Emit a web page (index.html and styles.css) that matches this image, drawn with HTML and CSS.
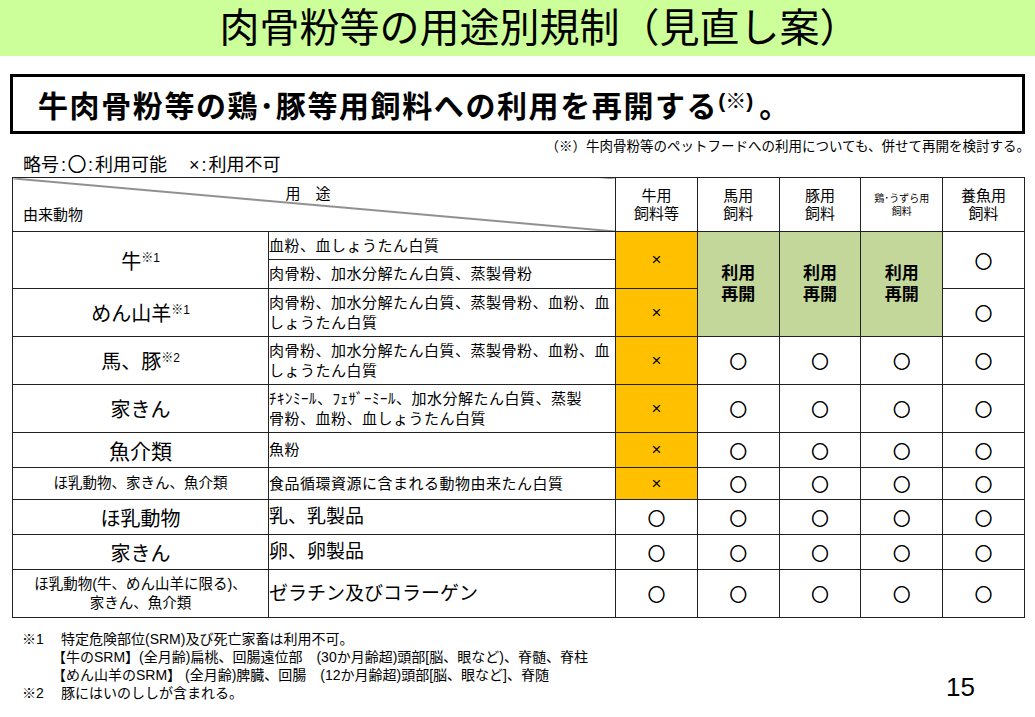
FILE: index.html
```html
<!DOCTYPE html>
<html lang="ja">
<head>
<meta charset="utf-8">
<title>肉骨粉等の用途別規制（見直し案）</title>
<link rel="stylesheet" href="styles.css">
</head>
<body>
<header class="band"><h1 class="title">肉骨粉等の用途別規制（見直し案）</h1></header>
<div class="headline"><span class="headline-text">牛肉骨粉等の鶏･豚等用飼料への利用を再開する<span class="hl-sup">(※)</span><span class="hl-end">。</span></span></div>
<p class="note">（※）牛肉骨粉等のペットフードへの利用についても、併せて再開を検討する。</p>
<p class="legend">略号<span class="colon">:</span><span class="circ">○</span><span class="colon">:</span>利用可能<span class="gap"></span>×<span class="colon">:</span>利用不可</p>
<table class="grid">
  <colgroup>
    <col class="c-animal">
    <col class="c-desc">
    <col class="c-mark">
    <col class="c-mark">
    <col class="c-mark">
    <col class="c-mark">
    <col class="c-mark">
  </colgroup>
  <tr class="r-head">
    <th colspan="2" class="diag"><div class="diag-inner"><span class="diag-top">用　途</span><span class="diag-bottom">由来動物</span></div></th>
    <th class="colh">牛用<br>飼料等</th>
    <th class="colh">馬用<br>飼料</th>
    <th class="colh">豚用<br>飼料</th>
    <th class="colh colh-small">鶏･うずら用<br>飼料</th>
    <th class="colh">養魚用<br>飼料</th>
  </tr>
  <tr class="r28">
    <td rowspan="2" class="animal">牛<span class="sup">※1</span></td>
    <td class="desc">血粉、血しょうたん白質</td>
    <td rowspan="2" class="mark ng">×</td>
    <td rowspan="3" class="resume">利用<br>再開</td>
    <td rowspan="3" class="resume">利用<br>再開</td>
    <td rowspan="3" class="resume">利用<br>再開</td>
    <td rowspan="2" class="mark ok">○</td>
  </tr>
  <tr class="r29">
    <td class="desc">肉骨粉、加水分解たん白質、蒸製骨粉</td>
  </tr>
  <tr class="r48">
    <td class="animal">めん山羊<span class="sup">※1</span></td>
    <td class="desc">肉骨粉、加水分解たん白質、蒸製骨粉、血粉、血<br>しょうたん白質</td>
    <td class="mark ng">×</td>
    <td class="mark ok">○</td>
  </tr>
  <tr class="r48">
    <td class="animal">馬、豚<span class="sup">※2</span></td>
    <td class="desc">肉骨粉、加水分解たん白質、蒸製骨粉、血粉、血<br>しょうたん白質</td>
    <td class="mark ng">×</td>
    <td class="mark ok">○</td>
    <td class="mark ok">○</td>
    <td class="mark ok">○</td>
    <td class="mark ok">○</td>
  </tr>
  <tr class="r48">
    <td class="animal">家きん</td>
    <td class="desc">ﾁｷﾝﾐｰﾙ、ﾌｪｻﾞｰﾐｰﾙ、加水分解たん白質、蒸製<br>骨粉、血粉、血しょうたん白質</td>
    <td class="mark ng">×</td>
    <td class="mark ok">○</td>
    <td class="mark ok">○</td>
    <td class="mark ok">○</td>
    <td class="mark ok">○</td>
  </tr>
  <tr class="r35">
    <td class="animal animal-fish">魚介類</td>
    <td class="desc">魚粉</td>
    <td class="mark ng">×</td>
    <td class="mark ok">○</td>
    <td class="mark ok">○</td>
    <td class="mark ok">○</td>
    <td class="mark ok">○</td>
  </tr>
  <tr class="r32">
    <td class="animal animal-small">ほ乳動物、家きん、魚介類</td>
    <td class="desc">食品循環資源に含まれる動物由来たん白質</td>
    <td class="mark ng">×</td>
    <td class="mark ok">○</td>
    <td class="mark ok">○</td>
    <td class="mark ok">○</td>
    <td class="mark ok">○</td>
  </tr>
  <tr class="r35">
    <td class="animal">ほ乳動物</td>
    <td class="desc desc-large">乳、乳製品</td>
    <td class="mark ok">○</td>
    <td class="mark ok">○</td>
    <td class="mark ok">○</td>
    <td class="mark ok">○</td>
    <td class="mark ok">○</td>
  </tr>
  <tr class="r35">
    <td class="animal">家きん</td>
    <td class="desc desc-large">卵、卵製品</td>
    <td class="mark ok">○</td>
    <td class="mark ok">○</td>
    <td class="mark ok">○</td>
    <td class="mark ok">○</td>
    <td class="mark ok">○</td>
  </tr>
  <tr class="r48">
    <td class="animal animal-small">ほ乳動物(牛、めん山羊に限る)、<br>家きん、魚介類</td>
    <td class="desc desc-large">ゼラチン及びコラーゲン</td>
    <td class="mark ok">○</td>
    <td class="mark ok">○</td>
    <td class="mark ok">○</td>
    <td class="mark ok">○</td>
    <td class="mark ok">○</td>
  </tr>
</table>
<footer class="foot">
  <div class="notes">
    <p class="fn"><span class="fn-mark">※1</span>特定危険部位(SRM)及び死亡家畜は利用不可。</p>
    <p class="fn fn-indent">【牛のSRM】(全月齢)扁桃、回腸遠位部　(30か月齢超)頭部[脳、眼など)、脊髄、脊柱</p>
    <p class="fn fn-indent">【めん山羊のSRM】 (全月齢)脾臓、回腸　(12か月齢超)頭部[脳、眼など]、脊随</p>
    <p class="fn"><span class="fn-mark">※2</span>豚にはいのししが含まれる。</p>
  </div>
  <div class="page">15</div>
</footer>
</body>
</html>
```
FILE: styles.css
```css
html, body {
  margin: 0;
  padding: 0;
  background: #ffffff;
}
body {
  width: 1035px;
  height: 717px;
  overflow: hidden;
  font-family: "Liberation Sans", "Noto Sans CJK JP", sans-serif;
  color: #000;
}
.band {
  background: #ccff99;
  height: 56px;
  display: flex;
  align-items: center;
  justify-content: center;
}
.title {
  margin: 0;
  font-size: 40px;
  font-weight: 400;
  line-height: 56px;
  padding-left: 44px;
}
.headline {
  margin: 18px 0 0 10px;
  width: 1015px;
  height: 60px;
  box-sizing: border-box;
  border: 3px solid #000;
  display: flex;
  align-items: center;
  padding-left: 25px;
}
.headline-text {
  font-size: 30px;
  font-weight: 700;
  letter-spacing: 1.6px;
  line-height: 34px;
}
.hl-sup {
  font-size: 21px;
  vertical-align: 9px;
  letter-spacing: 0;
}
.hl-end {
  padding-left: 6px;
}
.note {
  margin: 5px 5px 0 0;
  text-align: right;
  font-size: 13.5px;
  line-height: 15px;
}
.legend {
  margin: 0 0 0 23px;
  height: 18px;
  font-size: 18px;
  line-height: 18px;
}
.colon {
  display: inline-block;
  margin: 0 2px;
}
.circ {
  font-family: "Noto Sans CJK JP", sans-serif;
  -webkit-text-stroke: 0.7px #000;
}
.gap {
  display: inline-block;
  width: 22px;
}
.grid {
  margin: 5px 0 0 12px;
  width: 1012px;
  border-collapse: collapse;
  table-layout: fixed;
}
.c-animal { width: 256px; }
.c-desc { width: 347px; }
.c-mark { width: 81.8px; }
.grid th, .grid td {
  border: 1.5px solid #222;
  padding: 0;
}
.r-head { height: 54px; }
.r28 { height: 28px; }
.r29 { height: 29px; }
.r48 { height: 48px; }
.r35 { height: 35px; }
.r32 { height: 32px; }
.diag {
  background-image: linear-gradient(to top right, transparent calc(50% - 1px), #222 50%, transparent calc(50% + 1px));
  font-weight: 400;
  vertical-align: top;
}
.diag-inner {
  display: flex;
  flex-direction: column;
  height: 52px;
}
.diag-top {
  text-align: center;
  font-size: 15px;
  line-height: 18px;
  margin-top: 7px;
  padding-right: 12px;
}
.diag-bottom {
  text-align: left;
  font-size: 15px;
  line-height: 18px;
  margin-top: 3px;
  padding-left: 10px;
}
.colh {
  font-size: 15px;
  font-weight: 400;
  line-height: 18px;
  text-align: center;
}
.colh-small {
  font-size: 10px;
  line-height: 13px;
  padding-bottom: 8px;
}
.animal {
  font-size: 20px;
  text-align: center;
  white-space: nowrap;
}
.animal-fish {
  font-size: 21px;
}
.animal-small {
  font-size: 14.5px;
  line-height: 19px;
}
.sup {
  font-size: 12px;
  vertical-align: 7px;
}
.desc {
  font-size: 15px;
  line-height: 20px;
  padding-left: 11px;
  letter-spacing: 0.5px;
  white-space: nowrap;
}
.desc-large {
  font-size: 19px;
  letter-spacing: 0;
}
.mark {
  text-align: center;
}
.ng {
  background: #ffc000;
  font-size: 17px;
}
.ok {
  font-family: "Noto Sans CJK JP", sans-serif;
  font-size: 17px;
  -webkit-text-stroke: 0.7px #000;
}
.resume {
  background: #c4d79b;
  text-align: center;
  font-size: 17px;
  font-weight: 700;
  line-height: 21px;
}
.foot {
  display: flex;
  justify-content: space-between;
  align-items: flex-end;
  margin-top: 12px;
}
.notes {
  padding-left: 22px;
}
.fn {
  margin: 0;
  font-size: 14px;
  line-height: 18px;
  white-space: nowrap;
}
.fn-mark {
  display: inline-block;
  width: 39px;
}
.fn-indent {
  padding-left: 30px;
}
.page {
  font-size: 26px;
  line-height: 26px;
  padding-right: 60px;
  padding-bottom: 2px;
}
```
